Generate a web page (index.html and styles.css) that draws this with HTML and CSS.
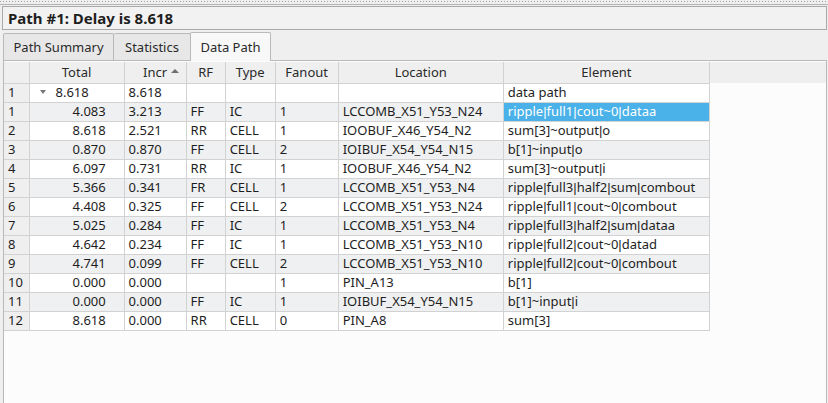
FILE: index.html
```html
<!DOCTYPE html>
<html>
<head>
<meta charset="utf-8">
<link rel="stylesheet" href="styles.css">
</head>
<body>
<div class="app">
  <div class="grip"></div>
  <div class="title">Path #1: Delay is 8.618</div>
  <div class="tabs">
    <div class="tab t1">Path Summary</div>
    <div class="tab t2">Statistics</div>
    <div class="tab active t3">Data Path</div>
  </div>
  <div class="frame">
    <table class="grid">
      <colgroup>
        <col class="c0"><col class="c1"><col class="c2"><col class="c3"><col class="c4"><col class="c5"><col class="c6"><col class="c7">
      </colgroup>
      <thead>
        <tr><th></th><th>Total</th><th class="sorted">Incr<span class="arrow"></span></th><th>RF</th><th>Type</th><th>Fanout</th><th>Location</th><th>Element</th></tr>
      </thead>
      <tbody>
        <tr><td class="rn">1</td><td class="tree"><span class="tri"></span>8.618</td><td>8.618</td><td></td><td></td><td></td><td></td><td>data path</td></tr>
        <tr class="alt"><td class="rn">1</td><td class="child">4.083</td><td>3.213</td><td>FF</td><td>IC</td><td>1</td><td>LCCOMB_X51_Y53_N24</td><td class="sel">ripple<span class="p">|</span>full1<span class="p">|</span>cout~0<span class="p">|</span>dataa</td></tr>
        <tr><td class="rn">2</td><td class="child">8.618</td><td>2.521</td><td>RR</td><td>CELL</td><td>1</td><td>IOOBUF_X46_Y54_N2</td><td>sum[3]~output<span class="p">|</span>o</td></tr>
        <tr class="alt"><td class="rn">3</td><td class="child">0.870</td><td>0.870</td><td>FF</td><td>CELL</td><td>2</td><td>IOIBUF_X54_Y54_N15</td><td>b[1]~input<span class="p">|</span>o</td></tr>
        <tr><td class="rn">4</td><td class="child">6.097</td><td>0.731</td><td>RR</td><td>IC</td><td>1</td><td>IOOBUF_X46_Y54_N2</td><td>sum[3]~output<span class="p">|</span>i</td></tr>
        <tr class="alt"><td class="rn">5</td><td class="child">5.366</td><td>0.341</td><td>FR</td><td>CELL</td><td>1</td><td>LCCOMB_X51_Y53_N4</td><td>ripple<span class="p">|</span>full3<span class="p">|</span>half2<span class="p">|</span>sum<span class="p">|</span>combout</td></tr>
        <tr><td class="rn">6</td><td class="child">4.408</td><td>0.325</td><td>FF</td><td>CELL</td><td>2</td><td>LCCOMB_X51_Y53_N24</td><td>ripple<span class="p">|</span>full1<span class="p">|</span>cout~0<span class="p">|</span>combout</td></tr>
        <tr class="alt"><td class="rn">7</td><td class="child">5.025</td><td>0.284</td><td>FF</td><td>IC</td><td>1</td><td>LCCOMB_X51_Y53_N4</td><td>ripple<span class="p">|</span>full3<span class="p">|</span>half2<span class="p">|</span>sum<span class="p">|</span>dataa</td></tr>
        <tr><td class="rn">8</td><td class="child">4.642</td><td>0.234</td><td>FF</td><td>IC</td><td>1</td><td>LCCOMB_X51_Y53_N10</td><td>ripple<span class="p">|</span>full2<span class="p">|</span>cout~0<span class="p">|</span>datad</td></tr>
        <tr class="alt"><td class="rn">9</td><td class="child">4.741</td><td>0.099</td><td>FF</td><td>CELL</td><td>2</td><td>LCCOMB_X51_Y53_N10</td><td>ripple<span class="p">|</span>full2<span class="p">|</span>cout~0<span class="p">|</span>combout</td></tr>
        <tr><td class="rn">10</td><td class="child">0.000</td><td>0.000</td><td></td><td></td><td>1</td><td>PIN_A13</td><td>b[1]</td></tr>
        <tr class="alt"><td class="rn">11</td><td class="child">0.000</td><td>0.000</td><td>FF</td><td>IC</td><td>1</td><td>IOIBUF_X54_Y54_N15</td><td>b[1]~input<span class="p">|</span>i</td></tr>
        <tr><td class="rn">12</td><td class="child">8.618</td><td>0.000</td><td>RR</td><td>CELL</td><td>0</td><td>PIN_A8</td><td>sum[3]</td></tr>
      </tbody>
    </table>
  </div>
</div>
</body>
</html>
```
FILE: styles.css
```css
html, body {
  margin: 0;
  padding: 0;
  background: #efeff0;
}
body {
  font-family: "Noto Sans", "Open Sans", sans-serif;
  font-size: 13px;
  color: #1e1e1e;
}
.app {
  width: 828px;
  height: 403px;
  display: flex;
  flex-direction: column;
  overflow: hidden;
}
.grip {
  height: 4px;
  margin-top: 1px;
  width: 828px;
  box-sizing: border-box;
  border-bottom: 1px solid #b4b4b4;
  background-image: linear-gradient(90deg, #a0a0a0 1px, transparent 1px);
  background-size: 3px 1px;
  background-position: 3px 0;
  background-repeat: repeat-x;
}
.title {
  margin: 1px 1px 0 2px;
  height: 24px;
  box-sizing: border-box;
  border: 1px solid #a9a9a9;
  background: #f2f2f2;
  font-weight: bold;
  font-size: 15px;
  line-height: 22px;
  padding-left: 5px;
}
.tabs {
  display: flex;
  align-items: flex-end;
  margin: 2px 0 0 3px;
  height: 28px;
}
.tab {
  height: 27px;
  box-sizing: border-box;
  border: 1px solid #b9b9b9;
  border-bottom: none;
  border-radius: 2px 2px 0 0;
  background: #e7e7e8;
  line-height: 26px;
  text-align: center;
  color: #2a2a2a;
}
.t1 { width: 111px; }
.t2 { width: 77px; border-left: none; }
.t3 {
  width: 81px;
  height: 29px;
  line-height: 28px;
  background: #f8f8f9;
  margin-left: -1px;
  margin-bottom: -1px;
  position: relative;
  z-index: 1;
}
.frame {
  flex: 1;
  margin: 0 1px 0 3px;
  border: 1px solid #b9b9b9;
  border-bottom: none;
  background: linear-gradient(#efeff0, #efeff0) 0 1px / 100% 21px no-repeat, #fcfcfc;
  padding-top: 1px;
}
.grid {
  border-collapse: collapse;
  table-layout: fixed;
  width: 706px;
}
.c0 { width: 25px; }
.c1 { width: 95px; }
.c2 { width: 62px; }
.c3 { width: 39px; }
.c4 { width: 50px; }
.c5 { width: 63px; }
.c6 { width: 165px; }
.c7 { width: 206px; }
.grid th {
  height: 20px;
  padding: 0 0 1px 0;
  line-height: 19px;
  font-weight: normal;
  text-align: center;
  color: #2a2a2a;
  border-right: 1px solid #d2d2d2;
  border-bottom: 1px solid #d2d2d2;
  background: #efeff0;
  position: relative;
  white-space: nowrap;
}
.arrow {
  position: absolute;
  right: 7px;
  top: 7px;
  width: 0;
  height: 0;
  border-left: 4px solid transparent;
  border-right: 4px solid transparent;
  border-bottom: 4px solid #6e6e6e;
}
.grid td {
  height: 17px;
  padding: 0 0 1px 4px;
  line-height: 17px;
  border: 1px solid #d2d2d2;
  background: #ffffff;
  white-space: nowrap;
  overflow: hidden;
}
.grid td:first-child { border-left: none; }
.grid tr.alt td { background: #eff0f1; }
.grid td.rn,
.grid tr.alt td.rn { background: #efeff0; }
.grid td.tree { padding-left: 10px; }
.tri {
  display: inline-block;
  width: 0;
  height: 0;
  border-left: 3px solid transparent;
  border-right: 3px solid transparent;
  border-top: 4px solid #777777;
  margin-right: 10px;
  vertical-align: 3px;
}
.grid td.child { padding-left: 43px; }
.p {
  font-family: "Liberation Sans", sans-serif;
}
.grid tr.alt td.sel,
.grid td.sel {
  background: #4ab2e8;
  color: #ffffff;
}
```
